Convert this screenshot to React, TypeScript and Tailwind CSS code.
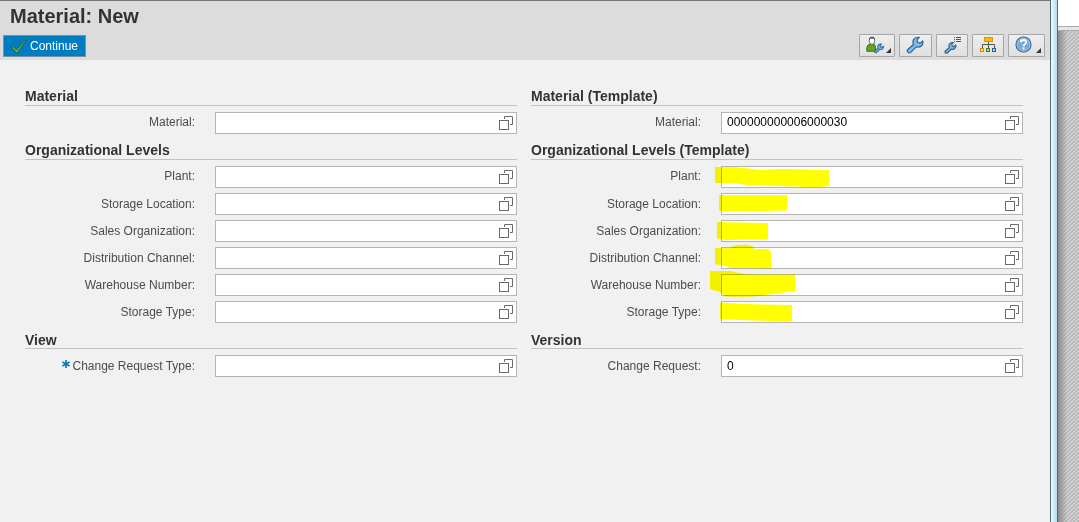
import React from "react";

const FONT = "font-['Liberation_Sans',Arial,sans-serif]";

function ValueHelpIcon() {
  return (
    <svg width="14" height="14" viewBox="0 0 14 14" className="shrink-0" fill="none" stroke="#6a6a6a">
      <path d="M5.5 3V0.5H13.5V8.5H11" />
      <rect x="0.5" y="4.5" width="9" height="9" />
    </svg>
  );
}

interface FieldProps {
  label: string;
  value?: string;
  required?: boolean;
  low?: boolean;
}

function Field({ label, value = "", required = false, low = false }: FieldProps) {
  return (
    <div className="flex h-[22px] items-center">
      <div className={`flex h-[22px] w-[190px] shrink-0 items-center justify-end pr-5 text-[12px] leading-[14px] text-[#4c4c4c] ${low ? "" : "pb-0.5"}`}>
        {required && (
          <svg width="8" height="8" viewBox="0 0 8 8" className="mr-[2px] mb-[5px] shrink-0" stroke="#0a7abf" strokeWidth="1.7">
            <path d="M4 0V8M0.4 2L7.6 6M7.6 2L0.4 6" />
          </svg>
        )}
        <span className="whitespace-nowrap">{label}</span>
      </div>
      <div className="flex h-[22px] w-[302px] items-center justify-between border border-[#b5b5b5] bg-white pr-[3px] pl-[5px] text-[12px] leading-[14px] text-black">
        <span className={low ? "" : "-translate-y-px"}>{value}</span>
        <ValueHelpIcon />
      </div>
    </div>
  );
}

function Section({ title, fields, low }: { title: string; fields: FieldProps[]; low?: boolean }) {
  return (
    <section>
      <h2 className={`h-5 border-b border-[#c2c2c2] text-[14px] font-bold whitespace-nowrap text-[#333] ${low ? "leading-[22px]" : "leading-5"}`}>{title}</h2>
      <div className="mt-1.5 flex flex-col gap-[5px]">
        {fields.map((f) => (
          <Field key={f.label} {...f} />
        ))}
      </div>
    </section>
  );
}

const orgLabels = ["Plant:", "Storage Location:", "Sales Organization:", "Distribution Channel:", "Warehouse Number:", "Storage Type:"];
const orgFields = orgLabels.map((label, i) => ({ label, low: i > 0 }));

function Wrench({ stroke = 1.2 }: { stroke?: number }) {
  return (
    <path
      d="M1.3 13 L7 8 Q5.6 4.6 7.6 2.4 Q9.6 0.3 12.8 0.9 L10.5 3.4 L11.2 6 L13.8 6.7 L16.2 4.3 Q17 7.5 14.8 9.5 Q12.6 11.3 9.8 10.3 L4.5 15.6 Q2.8 17 1.3 15.6 Q0 14.3 1.3 13Z"
      fill="#82b9e5"
      stroke="#2f6391"
      strokeWidth={stroke}
      strokeLinejoin="round"
    />
  );
}

function MenuCorner() {
  return (
    <svg width="5" height="5" viewBox="0 0 5 5" className="absolute right-[3px] bottom-[3px]">
      <path d="M5 0V5H0Z" fill="#333" />
    </svg>
  );
}

function ToolButton({ label, size, menu, children }: { label: string; size: string; menu?: boolean; children: React.ReactNode }) {
  return (
    <button
      aria-label={label}
      className={`relative flex h-[23px] items-start rounded-[1px] border border-[#a6a6a6] bg-gradient-to-b from-[#eeeeee] to-[#e0e0e0] pt-px ${size}`}
    >
      {children}
      {menu && <MenuCorner />}
    </button>
  );
}

function Toolbar() {
  return (
    <div className="flex items-center gap-1">
      <ToolButton label="Personalize" size="w-9 pl-[6px]" menu>
        <svg width="18" height="18" viewBox="0 0 18 18">
          <path d="M0.8 15.3V12Q0.8 8.6 4 8.3L6 9.6L8 8.3Q9.4 9 9.4 11V15.3Z" fill="#5fa81f" stroke="#3b7910" />
          <ellipse cx="6" cy="4.8" rx="2.8" ry="3.5" fill="#fafafa" stroke="#666" strokeWidth="0.9" />
          <path d="M3 4.3Q3 0.8 6 0.8Q9 0.8 9 4.3L7.8 2.6H4.2Z" fill="#444" />
          <g transform="translate(8.2 7.6) scale(.56)">
            <Wrench stroke={1.9} />
          </g>
        </svg>
      </ToolButton>
      <ToolButton label="Settings" size="w-[33px] pl-[6px]">
        <svg width="18" height="18" viewBox="-0.5 -0.5 18 18"><Wrench /></svg>
      </ToolButton>
      <ToolButton label="Configure list" size="w-8 pl-[7px]">
        <svg width="18" height="18" viewBox="0 0 18 18">
          <g transform="translate(0.5 6) scale(.69)">
            <Wrench stroke={1.7} />
          </g>
          <path d="M10 1.5h1M12 1.5h5M10 3.5h1M12 3.5h5M10 5.5h1M12 5.5h5" stroke="#555" />
        </svg>
      </ToolButton>
      <ToolButton label="Hierarchy" size="w-8 pl-[7px]">
        <svg width="17" height="17" viewBox="0 0 17 17">
          <path d="M8.5 5V12M2.5 12V8.5H14.5V12" fill="none" stroke="#555" />
          <rect x="4.5" y="1.5" width="8" height="4" fill="#ffb900" stroke="#e59100" />
          <rect x="0.5" y="12.5" width="3" height="3" fill="#ffe24c" stroke="#dc8b00" />
          <rect x="6.5" y="12.5" width="3" height="3" fill="#b5d88b" stroke="#3e7c2b" />
          <rect x="12.5" y="12.5" width="3" height="3" fill="#acd3f1" stroke="#28618e" />
        </svg>
      </ToolButton>
      <ToolButton label="Help" size="w-[37px] pl-[6px]" menu>
        <svg width="17" height="17" viewBox="0 0 17 17">
          <circle cx="8.5" cy="8.5" r="7.5" fill="#77a9d3" stroke="#356b9a" strokeWidth="1.2" />
          <circle cx="8.5" cy="8.5" r="6.4" fill="none" stroke="#a9cce8" strokeWidth="0.8" />
          <path d="M5.8 6.4Q5.9 4 8.5 4Q11.2 4 11.2 6.3Q11.2 7.5 9.8 8.3Q8.6 9 8.6 10.3" fill="none" stroke="#fff" strokeWidth="1.8" />
          <rect x="7.6" y="11.4" width="1.9" height="1.9" fill="#fff" />
        </svg>
      </ToolButton>
    </div>
  );
}

function Highlights() {
  return (
    <svg width="1079" height="522" viewBox="0 0 1079 522" className="pointer-events-none absolute top-0 left-0 mix-blend-multiply" fill="#ffff00">
      <path d="M715 167L737 167.3Q750 169 763 170Q775 168.5 787 169L829 170.3V185.5L822 187H808L747 185L733 183H715Z" />
      <path d="M719 195H787V210.5L763 211H719Z" />
      <path d="M717 222L768 223V239.5L725 240L717 238.5Z" />
      <path d="M715 248H730Q733 245 740 245Q751 243.5 755 249H768Q771 250 771 254V268.5L730 268L722 265L715 264.5Z" />
      <path d="M710 271H730L747 274.5H795V291L763 295.5Q752 297.5 725 296.5L720 292L710 289Z" />
      <path d="M720 302.5L743 304L792 305V321.5L753 320.5L720 319Z" />
    </svg>
  );
}

export default function App() {
  return (
    <div className={`relative isolate flex h-[522px] w-[1079px] overflow-hidden bg-[#f1f1f1] ${FONT}`}>
      <main className="w-[1050px] shrink-0">
        <header className="h-[60px] border-t border-[#777] bg-[#dcdcdc]">
          <h1 className="h-[33px] pl-[10px] text-[20px] leading-[30px] font-bold text-[#333]">Material: New</h1>
          <div className="flex h-[23px] items-end justify-between pr-[5px] pl-[3px]">
            <button className="flex h-[22px] w-[83px] items-center border border-[#7594a8] bg-[#007cc0] pl-[7px] text-[12px] leading-[14px] text-white">
              <svg width="16" height="15" viewBox="0 0 16 15" className="mr-[3px]">
                <path d="M1 8.5L2.8 7.5L5.5 11.2L14.2 1L15 1.6L5.8 14Z" fill="#7bc943" stroke="#23642c" strokeWidth="0.9" />
              </svg>
              <span>Continue</span>
            </button>
            <Toolbar />
          </div>
        </header>
        <div className="grid grid-cols-[492px_492px] gap-x-[14px] pt-[26px] pl-[25px]">
          <div className="flex flex-col gap-1.5">
            <Section title="Material" fields={[{ label: "Material:" }]} />
            <Section title="Organizational Levels" fields={orgFields} />
            <Section title="View" fields={[{ label: "Change Request Type:", required: true, low: true }]} low />
          </div>
          <div className="flex flex-col gap-1.5">
            <Section title="Material (Template)" fields={[{ label: "Material:", value: "000000000006000030" }]} />
            <Section title="Organizational Levels (Template)" fields={orgFields} />
            <Section title="Version" fields={[{ label: "Change Request:", value: "0", low: true }]} low />
          </div>
        </div>
      </main>
      <div className="w-px bg-[#4d6c72]" />
      <div className="w-[6px] bg-gradient-to-r from-[#eef8ff] to-[#b9daf3]" />
      <div className="w-px bg-[#5f6a72]" />
      <aside className="flex flex-1 flex-col">
        <div className="h-[26px] bg-white" />
        <div className="h-[5px] border-y border-[#aaa] bg-[#e6e6e6]" />
        <div className="flex-1 bg-[linear-gradient(to_right,rgba(70,70,70,0.45),rgba(70,70,70,0)_9px),repeating-linear-gradient(135deg,#cecece_0px,#cecece_1.41px,#b9b9b9_1.41px,#b9b9b9_2.828px)]" />
      </aside>
      <Highlights />
    </div>
  );
}
